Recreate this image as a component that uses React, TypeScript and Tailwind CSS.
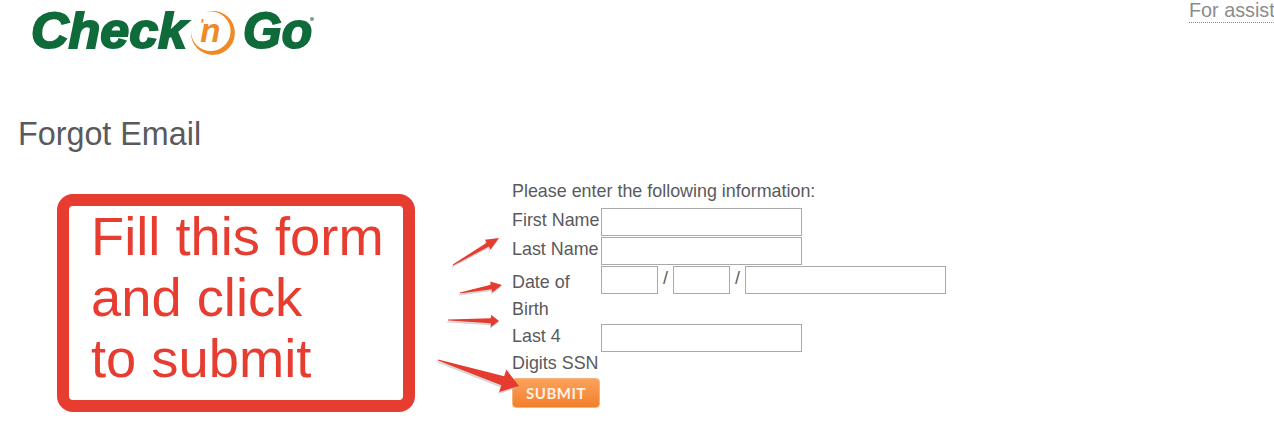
function Logo() {
  return (
    <svg width="300" height="60" viewBox="0 0 300 60" className="block">
      <text x="1" y="45" fontFamily="'Liberation Sans', sans-serif" fontWeight="700" fontStyle="italic" fontSize="50" fill="#0f6b3a" stroke="#0f6b3a" strokeWidth="2" textLength="156" lengthAdjust="spacingAndGlyphs">Check</text>
      <path d="M176 9 A22 22 0 1 1 161 28 A19.8 19.8 0 1 0 176 9 Z" fill="#f08a24" />
      <text x="170" y="26" fontFamily="'Liberation Sans', sans-serif" fontWeight="700" fontStyle="italic" fill="#f08a24">
        <tspan fontSize="14">'</tspan>
        <tspan dx="-3" dy="13" fontSize="33">n</tspan>
      </text>
      <text x="213" y="45" fontFamily="'Liberation Sans', sans-serif" fontWeight="700" fontStyle="italic" fontSize="50" fill="#0f6b3a" stroke="#0f6b3a" strokeWidth="2" textLength="69" lengthAdjust="spacingAndGlyphs">Go</text>
      <circle cx="282" cy="16" r="2" fill="#7fa08c" />
    </svg>
  );
}

function Arrow({ x1, y1, x2, y2, w = 8, head = 14 }: { x1: number; y1: number; x2: number; y2: number; w?: number; head?: number }) {
  const a = Math.atan2(y2 - y1, x2 - x1);
  const c = Math.cos(a);
  const s = Math.sin(a);
  const bx = x2 - c * head;
  const by = y2 - s * head;
  const px = -s;
  const py = c;
  const pts = [
    [x1 + px * 0.5, y1 + py * 0.5],
    [bx + px * (w * 0.25), by + py * (w * 0.25)],
    [bx + px * (w * 0.62), by + py * (w * 0.62)],
    [x2, y2],
    [bx - px * (w * 0.62), by - py * (w * 0.62)],
    [bx - px * (w * 0.25), by - py * (w * 0.25)],
    [x1 - px * 0.5, y1 - py * 0.5],
  ]
    .map((p) => p.join(','))
    .join(' ');
  return (
    <>
      <polygon points={pts} fill="#bdbdbd" opacity="0.6" transform="translate(-1 2)" />
      <polygon points={pts} fill="#e63c2f" />
    </>
  );
}

function Field({ className = 'w-[201px]' }: { className?: string }) {
  return <input className={`h-[28px] border border-[#a9a9a9] bg-white ${className}`} />;
}

export default function App() {
  return (
    <div className="relative h-[427px] w-[1274px] overflow-hidden bg-white font-['Liberation_Sans',Arial,sans-serif] text-[#5a5a5c]">
      <header className="flex h-[67px] items-start justify-between">
        <div className="pl-[30px] pt-[3px]">
          <Logo />
        </div>
        <div className="h-[23px] w-[85px] whitespace-nowrap border-b border-dotted border-[#8a8a8a] text-[19.8px] leading-[20px] text-[#8c8c8c]">
          For assist
        </div>
      </header>

      <h1 className="ml-[18px] mt-[47px] text-[32.3px] leading-[40px]">Forgot Email</h1>

      <main className="mt-[40px] flex items-start">
        <div className="ml-[57px] h-[218px] w-[358px] rounded-[16px] border-[12px] border-[#e73c30] pl-[22px] text-[54.3px] leading-[61px] text-[#e73c30]">
          <div>Fill this form</div>
          <div>and click</div>
          <div>to submit</div>
        </div>

        <form className="ml-[97px] mt-[-14px] text-[17.9px]">
          <div className="h-[27px] leading-[22px]">Please enter the following information:</div>
          <div className="mt-[1px] grid grid-cols-[89px_auto] gap-y-[1px]">
            <div className="leading-[24px]">First Name</div>
            <Field />
            <div className="leading-[24px]">Last Name</div>
            <Field />
            <div className="pt-[3px] leading-[27px]">Date of Birth</div>
            <div className="flex items-start">
              <Field className="w-[57px]" />
              <span className="w-[15px] text-center leading-[24px]">/</span>
              <Field className="w-[57px]" />
              <span className="w-[15px] text-center leading-[24px]">/</span>
              <Field className="w-[201px]" />
            </div>
            <div className="mt-[-1px] leading-[27px]">Last 4 Digits SSN</div>
            <div>
              <Field />
            </div>
          </div>
          <button
            type="button"
            className="mt-[1px] flex h-[30px] w-[88px] items-center justify-center rounded-[4px] border border-[#f9b27a] bg-gradient-to-b from-[#fba25b] to-[#f28028] font-['Lato',sans-serif] text-[15px] font-bold tracking-[0.5px] text-[#fdf1e4]"
          >
            SUBMIT
          </button>
        </form>
      </main>

      <svg className="absolute left-0 top-0" width="1274" height="427">
        <Arrow x1={453} y1={265} x2={499} y2={238} w={9} head={13} />
        <Arrow x1={460} y1={293} x2={502} y2={285} w={9} head={11} />
        <Arrow x1={448} y1={320} x2={499} y2={321} w={10} head={8} />
        <Arrow x1={438} y1={360} x2={519} y2={386} w={19} head={17} />
      </svg>
    </div>
  );
}
